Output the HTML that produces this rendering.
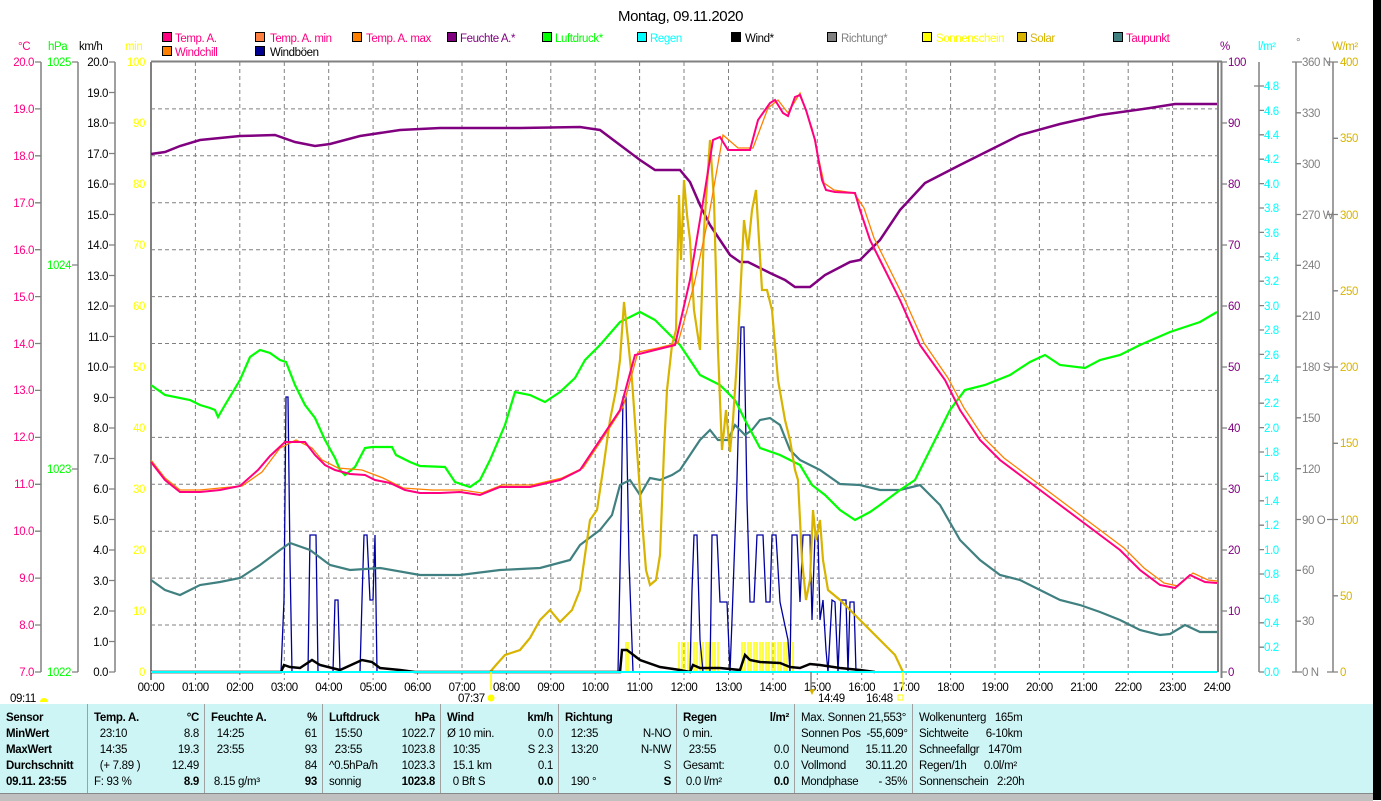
<!DOCTYPE html>
<html><head><meta charset="utf-8"><style>
body{margin:0;width:1381px;height:800px;overflow:hidden;background:#fff;font-family:"Liberation Sans",sans-serif;position:relative}
svg{position:absolute;left:0;top:0}
svg text{font-family:"Liberation Sans",sans-serif;font-size:11.5px;letter-spacing:-0.4px}
.tb{position:absolute;top:704px;height:89px;background:#cdf5f5;border-right:1px solid #a0a0a0;font-size:11.5px;letter-spacing:-0.3px}
.tb div{height:16px;line-height:16px;display:flex;justify-content:space-between;padding:0 5px 0 6px;white-space:pre}
.tb .h{font-weight:bold;margin-top:6px}
.tb b{font-weight:bold}
</style></head><body>
<svg width="1381" height="800" viewBox="0 0 1381 800">
<rect x="1373" y="0" width="8" height="800" fill="#000"/>
<text x="618" y="21" style="font-size:15px">Montag, 09.11.2020</text>
<!-- legend -->
<g stroke="#000" stroke-width="1">
<rect x="162.5" y="32.5" width="9" height="9" fill="#ff0080"/>
<rect x="255.5" y="32.5" width="9" height="9" fill="#ff8040"/>
<rect x="352.5" y="32.5" width="9" height="9" fill="#ff8000"/>
<rect x="447.5" y="32.5" width="9" height="9" fill="#800080"/>
<rect x="542.5" y="32.5" width="9" height="9" fill="#00ff00"/>
<rect x="637.5" y="32.5" width="9" height="9" fill="#00ffff"/>
<rect x="731.5" y="32.5" width="9" height="9" fill="#000"/>
<rect x="827.5" y="32.5" width="9" height="9" fill="#808080"/>
<rect x="922.5" y="32.5" width="9" height="9" fill="#ffff00"/>
<rect x="1017.5" y="32.5" width="9" height="9" fill="#d8b400"/>
<rect x="1113.5" y="32.5" width="9" height="9" fill="#408080"/>
<rect x="162.5" y="46.5" width="9" height="9" fill="#ff8000"/>
<rect x="255.5" y="46.5" width="9" height="9" fill="#000090"/>
</g>
<g>
<text x="175" y="42" fill="#ff0080">Temp. A.</text>
<text x="270" y="42" fill="#ff0080">Temp. A. min</text>
<text x="366" y="42" fill="#ff0080">Temp. A. max</text>
<text x="460" y="42" fill="#800080">Feuchte A.*</text>
<text x="555" y="42" fill="#00ff00">Luftdruck*</text>
<text x="650" y="42" fill="#00ffff">Regen</text>
<text x="745" y="42" fill="#000">Wind*</text>
<text x="841" y="42" fill="#808080">Richtung*</text>
<text x="936" y="42" fill="#ffff00">Sonnenschein</text>
<text x="1030" y="42" fill="#d8b400">Solar</text>
<text x="1126" y="42" fill="#ff0080">Taupunkt</text>
<text x="175" y="56" fill="#ff0080">Windchill</text>
<text x="270" y="56" fill="#000">Windböen</text>
</g>
<!-- axis headers -->
<text x="18" y="50" fill="#ff0080">°C</text>
<text x="48" y="50" fill="#00ff00">hPa</text>
<text x="79" y="50" fill="#000">km/h</text>
<text x="125" y="50" fill="#ffff00">min</text>
<text x="1220" y="50" fill="#800080">%</text>
<text x="1258" y="50" fill="#00ffff">l/m²</text>
<text x="1296" y="46" fill="#808080">°</text>
<text x="1332" y="50" fill="#d8b400">W/m²</text>
<!-- axis lines -->
<g stroke="#808080" stroke-width="1.5" fill="none">
<line x1="41" y1="62" x2="41" y2="672"/><line x1="78" y1="62" x2="78" y2="672"/><line x1="115" y1="62" x2="115" y2="672"/>
<line x1="1259" y1="62" x2="1259" y2="672"/><line x1="1296" y1="62" x2="1296" y2="672"/><line x1="1333" y1="62" x2="1333" y2="672"/>
</g>
<!-- grid -->
<g stroke="#808080" stroke-width="1" stroke-dasharray="4,3">
<line x1="151" y1="108.9" x2="1217" y2="108.9"/><line x1="151" y1="155.8" x2="1217" y2="155.8"/><line x1="151" y1="202.8" x2="1217" y2="202.8"/><line x1="151" y1="249.7" x2="1217" y2="249.7"/><line x1="151" y1="296.6" x2="1217" y2="296.6"/><line x1="151" y1="343.5" x2="1217" y2="343.5"/><line x1="151" y1="390.4" x2="1217" y2="390.4"/><line x1="151" y1="437.4" x2="1217" y2="437.4"/><line x1="151" y1="484.3" x2="1217" y2="484.3"/><line x1="151" y1="531.2" x2="1217" y2="531.2"/><line x1="151" y1="578.1" x2="1217" y2="578.1"/><line x1="151" y1="625" x2="1217" y2="625"/>
<line x1="195.4" y1="62" x2="195.4" y2="680"/><line x1="239.8" y1="62" x2="239.8" y2="680"/><line x1="284.3" y1="62" x2="284.3" y2="680"/><line x1="328.7" y1="62" x2="328.7" y2="680"/><line x1="373.1" y1="62" x2="373.1" y2="680"/><line x1="417.5" y1="62" x2="417.5" y2="680"/><line x1="462" y1="62" x2="462" y2="680"/><line x1="506.4" y1="62" x2="506.4" y2="680"/><line x1="550.8" y1="62" x2="550.8" y2="680"/><line x1="595.2" y1="62" x2="595.2" y2="680"/><line x1="639.6" y1="62" x2="639.6" y2="680"/><line x1="684" y1="62" x2="684" y2="680"/><line x1="728.5" y1="62" x2="728.5" y2="680"/><line x1="772.9" y1="62" x2="772.9" y2="680"/><line x1="817.3" y1="62" x2="817.3" y2="680"/><line x1="861.7" y1="62" x2="861.7" y2="680"/><line x1="906.1" y1="62" x2="906.1" y2="680"/><line x1="950.6" y1="62" x2="950.6" y2="680"/><line x1="995" y1="62" x2="995" y2="680"/><line x1="1039.4" y1="62" x2="1039.4" y2="680"/><line x1="1083.8" y1="62" x2="1083.8" y2="680"/><line x1="1128.2" y1="62" x2="1128.2" y2="680"/><line x1="1172.6" y1="62" x2="1172.6" y2="680"/>
</g>
<!-- chart border -->
<g stroke="#808080" stroke-width="2" fill="none">
<line x1="151" y1="61.5" x2="1222" y2="61.5"/><line x1="151" y1="62" x2="151" y2="680"/>
<line x1="1218" y1="62" x2="1218" y2="672"/><line x1="1221.5" y1="62" x2="1221.5" y2="678"/>
</g>
<!-- sunshine bars -->
<g stroke="#ffff00" stroke-width="1.5">
<line x1="626" y1="642" x2="626" y2="672"/><line x1="628" y1="642" x2="628" y2="672"/>
<line x1="679" y1="642" x2="679" y2="672"/><line x1="682" y1="642" x2="682" y2="672"/><line x1="685" y1="642" x2="685" y2="672"/><line x1="688" y1="642" x2="688" y2="672"/><line x1="691" y1="642" x2="691" y2="672"/><line x1="694" y1="642" x2="694" y2="672"/><line x1="697" y1="642" x2="697" y2="672"/><line x1="700" y1="642" x2="700" y2="672"/><line x1="703" y1="642" x2="703" y2="672"/><line x1="706" y1="642" x2="706" y2="672"/><line x1="709" y1="642" x2="709" y2="672"/><line x1="712" y1="642" x2="712" y2="672"/><line x1="715" y1="642" x2="715" y2="672"/><line x1="718" y1="642" x2="718" y2="672"/>
<line x1="742" y1="642" x2="742" y2="672"/><line x1="745" y1="642" x2="745" y2="672"/><line x1="748" y1="642" x2="748" y2="672"/><line x1="751" y1="642" x2="751" y2="672"/><line x1="754" y1="642" x2="754" y2="672"/><line x1="757" y1="642" x2="757" y2="672"/><line x1="760" y1="642" x2="760" y2="672"/><line x1="763" y1="642" x2="763" y2="672"/><line x1="766" y1="642" x2="766" y2="672"/><line x1="769" y1="642" x2="769" y2="672"/><line x1="772" y1="642" x2="772" y2="672"/><line x1="775" y1="642" x2="775" y2="672"/><line x1="778" y1="642" x2="778" y2="672"/><line x1="781" y1="642" x2="781" y2="672"/><line x1="784" y1="642" x2="784" y2="672"/><line x1="787" y1="642" x2="787" y2="672"/><line x1="790" y1="642" x2="790" y2="672"/><line x1="793" y1="642" x2="793" y2="672"/>
</g>
<!-- gusts -->
<polyline fill="none" stroke="#0000a0" stroke-width="1.3" points="281,672 284,600 286,397 288,397 290,560 292,672 308,672 310,535 316,535 318,672 333,672 335,600 338,600 340,672 360,672 362,600 364,535 367,535 370,600 373,600 375,535 377,672 618,672 621,520 623,397 626,397 629,560 633,672 690,672 692,590 694,535 697,535 700,640 703,672 710,672 712,535 717,535 720,602 727,602 730,672 732,620 737,480 741,327 744,327 747,500 750,602 754,602 757,535 763,535 766,602 770,602 772,535 776,535 780,602 788,640 790,672 792,535 797,535 800,602 803,535 810,535 812,620 815,535 818,535 820,620 823,600 826,650 828,672 832,600 835,602 838,672 841,600 846,600 848,672 850,602 854,602 856,672"/>
<!-- dewpoint -->
<polyline fill="none" stroke="#408080" stroke-width="2.2" points="151,580 165,590 180,595 200,585 220,582 240,578 260,565 280,550 290,543 310,550 330,565 350,570 380,568 420,575 460,575 500,570 540,568 570,560 580,545 600,530 612,515 620,485 630,480 640,495 650,478 660,480 672,475 680,470 690,455 700,440 710,430 718,440 728,440 735,425 745,435 752,430 760,420 770,418 780,425 790,450 800,460 820,470 840,484 860,485 880,490 900,490 920,485 940,505 960,540 980,560 1000,575 1020,580 1040,590 1060,600 1080,605 1100,612 1120,620 1140,630 1160,635 1170,634 1185,625 1200,632 1217,632"/>
<!-- pressure -->
<polyline fill="none" stroke="#00ff00" stroke-width="2.2" points="151,385 165,395 190,400 200,405 210,408 215,410 218,417 225,405 240,380 250,357 260,350 270,353 280,360 286,362 295,385 305,405 315,418 325,440 335,458 340,470 345,475 355,467 365,448 372,447 392,447 396,455 410,462 420,466 445,467 455,482 470,487 480,480 490,460 505,425 515,392 530,395 545,402 560,392 575,378 585,360 600,345 620,322 640,312 655,320 665,330 680,345 700,375 720,385 735,400 745,420 760,448 780,455 800,465 812,485 825,495 840,510 855,520 870,512 880,505 900,490 915,480 930,450 950,410 965,390 985,385 1010,375 1030,362 1045,355 1060,365 1085,368 1100,360 1120,355 1140,345 1170,332 1200,322 1217,312"/>
<!-- humidity -->
<polyline fill="none" stroke="#800080" stroke-width="2.5" points="151,154 165,152 180,146 200,140 220,138 240,136 275,135 295,142 315,146 330,144 360,136 400,130 440,128 520,128 580,127 600,130 620,145 640,160 655,170 680,170 690,182 700,205 710,225 720,240 730,255 740,262 748,262 760,268 770,273 785,280 795,287 810,287 825,275 850,262 860,260 880,240 900,210 925,183 960,165 990,150 1020,135 1060,124 1100,115 1150,108 1175,104 1217,104"/>
<!-- solar -->
<polyline fill="none" stroke="#d8b400" stroke-width="2.2" points="490,672 496,665 505,655 520,650 530,638 540,620 550,610 560,622 572,610 580,590 590,520 597,510 603,470 610,420 616,390 620,360 624,302 628,340 632,380 637,450 642,520 646,570 650,585 656,580 660,555 664,450 667,390 672,345 676,330 679,195 681,260 684,180 687,215 690,240 694,310 700,350 704,230 710,140 714,200 718,350 722,450 726,410 730,452 733,420 737,360 741,280 744,220 748,250 752,210 756,190 759,240 762,290 767,290 772,310 778,380 785,420 790,440 795,470 798,480 802,560 806,600 810,580 813,510 816,540 820,520 823,560 828,590 840,600 860,620 880,640 895,655 903,672"/>
<!-- windchill/temp -->
<polyline fill="none" stroke="#ff8000" stroke-width="1.3" points="151,460 165,478 180,490 200,490 220,488 242,486 262,472 280,448 296,440 312,448 322,460 338,468 362,470 383,478 403,488 432,490 462,490 482,493 502,485 532,485 562,478 583,468 603,438 623,407 638,352 658,348 678,343 694,285 709,215 723,135 738,148 753,148 768,108 778,100 788,113 800,93 812,128 824,183 834,190 854,193 864,208 874,238 884,258 904,298 924,343 948,378 964,408 984,438 1004,458 1024,473 1044,488 1064,503 1084,518 1104,533 1124,548 1144,568 1164,583 1178,586 1193,573 1208,580 1217,581"/>
<polyline fill="none" stroke="#ff0080" stroke-width="2" points="151,462 165,480 180,492 200,492 220,490 240,486 258,470 270,456 285,442 305,442 315,455 325,465 335,470 350,474 365,475 375,480 390,483 405,490 420,493 440,493 460,492 480,495 500,487 530,487 560,480 580,470 600,440 620,410 635,355 655,350 675,345 690,280 705,190 713,140 720,137 728,150 750,150 758,120 770,103 775,100 783,113 788,116 795,97 800,95 806,110 815,140 822,180 826,190 835,192 855,193 860,210 870,240 880,260 900,300 920,345 945,380 960,410 980,440 1000,460 1020,475 1040,490 1060,505 1080,520 1100,535 1120,550 1140,570 1160,585 1175,588 1190,575 1205,582 1217,583"/>
<!-- wind -->
<polyline fill="none" stroke="#000" stroke-width="2.5" points="151,672 281,672 284,665 290,667 300,668 312,660 320,665 340,670 362,660 372,662 380,668 400,670 415,672 620,672 622,650 627,650 640,660 660,667 680,670 690,672 693,665 700,668 720,668 740,670 745,655 750,660 760,662 780,663 790,667 800,668 810,664 820,665 840,668 860,670 875,672"/>
<line x1="151" y1="672" x2="1217" y2="672" stroke="#00ffff" stroke-width="2"/>
<!-- left ticks and labels -->
<g stroke="#808080" stroke-width="1.3">
<path d="M35 62h6M35 108.9h6M35 155.8h6M35 202.8h6M35 249.7h6M35 296.6h6M35 343.5h6M35 390.4h6M35 437.4h6M35 484.3h6M35 531.2h6M35 578.1h6M35 625h6M35 672h6"/>
<path d="M72 62h6M72 265h6M72 469h6M72 672h6"/>
<path d="M109 62h6M109 92.5h6M109 123h6M109 153.5h6M109 184h6M109 214.5h6M109 245h6M109 275.5h6M109 306h6M109 336.5h6M109 367h6M109 397.5h6M109 428h6M109 458.5h6M109 489h6M109 519.5h6M109 550h6M109 580.5h6M109 611h6M109 641.5h6M109 672h6"/>
<path d="M1222 62h5M1222 123h5M1222 184h5M1222 245h5M1222 306h5M1222 367h5M1222 428h5M1222 489h5M1222 550h5M1222 611h5M1222 672h5"/>
<path d="M1259 86h5M1259 110.4h5M1259 134.8h5M1259 159.2h5M1259 183.6h5M1259 208h5M1259 232.4h5M1259 256.8h5M1259 281.2h5M1259 305.6h5M1259 330h5M1259 354.4h5M1259 378.8h5M1259 403.2h5M1259 427.6h5M1259 452h5M1259 476.4h5M1259 500.8h5M1259 525.2h5M1259 549.6h5M1259 574h5M1259 598.4h5M1259 622.8h5M1259 647.2h5M1259 672h5M1254 86h5"/>
<path d="M1292 62h10M1296 112.8h5M1296 163.7h5M1296 214.5h5M1296 265.3h5M1296 316.2h5M1296 367h5M1296 417.8h5M1296 468.7h5M1296 519.5h5M1296 570.3h5M1296 621.2h5M1292 672h10"/>
<path d="M1333 62h5M1333 138.3h5M1333 214.5h5M1333 290.8h5M1333 367h5M1333 443.3h5M1333 519.5h5M1333 595.8h5M1333 672h5M1327 62h6M1327 214.5h6M1327 367h6M1327 519.5h6M1327 672h6"/>
</g>
<g fill="#ff0080" text-anchor="end">
<text x="34" y="66">20.0</text><text x="34" y="113">19.0</text><text x="34" y="160">18.0</text><text x="34" y="207">17.0</text><text x="34" y="254">16.0</text><text x="34" y="301">15.0</text><text x="34" y="348">14.0</text><text x="34" y="394">13.0</text><text x="34" y="441">12.0</text><text x="34" y="488">11.0</text><text x="34" y="535">10.0</text><text x="34" y="582">9.0</text><text x="34" y="629">8.0</text><text x="34" y="676">7.0</text>
</g>
<g fill="#00ff00" text-anchor="end"><text x="71" y="66">1025</text><text x="71" y="269">1024</text><text x="71" y="473">1023</text><text x="71" y="676">1022</text></g>
<g fill="#000" text-anchor="end">
<text x="108" y="66">20.0</text><text x="108" y="97">19.0</text><text x="108" y="127">18.0</text><text x="108" y="158">17.0</text><text x="108" y="188">16.0</text><text x="108" y="219">15.0</text><text x="108" y="249">14.0</text><text x="108" y="280">13.0</text><text x="108" y="310">12.0</text><text x="108" y="341">11.0</text><text x="108" y="371">10.0</text><text x="108" y="402">9.0</text><text x="108" y="432">8.0</text><text x="108" y="463">7.0</text><text x="108" y="493">6.0</text><text x="108" y="524">5.0</text><text x="108" y="554">4.0</text><text x="108" y="585">3.0</text><text x="108" y="615">2.0</text><text x="108" y="646">1.0</text><text x="108" y="676">0.0</text>
</g>
<g fill="#ffff00" text-anchor="end">
<text x="145" y="66">100</text><text x="145" y="127">90</text><text x="145" y="188">80</text><text x="145" y="249">70</text><text x="145" y="310">60</text><text x="145" y="371">50</text><text x="145" y="432">40</text><text x="145" y="493">30</text><text x="145" y="554">20</text><text x="145" y="615">10</text><text x="145" y="676">0</text>
</g>
<g fill="#800080">
<text x="1228" y="66">100</text><text x="1228" y="127">90</text><text x="1228" y="188">80</text><text x="1228" y="249">70</text><text x="1228" y="310">60</text><text x="1228" y="371">50</text><text x="1228" y="432">40</text><text x="1228" y="493">30</text><text x="1228" y="554">20</text><text x="1228" y="615">10</text><text x="1228" y="676">0</text>
</g>
<g fill="#00ffff">
<text x="1264" y="90">4.8</text><text x="1264" y="115">4.6</text><text x="1264" y="139">4.4</text><text x="1264" y="163">4.2</text><text x="1264" y="188">4.0</text><text x="1264" y="212">3.8</text><text x="1264" y="237">3.6</text><text x="1264" y="261">3.4</text><text x="1264" y="285">3.2</text><text x="1264" y="310">3.0</text><text x="1264" y="334">2.8</text><text x="1264" y="359">2.6</text><text x="1264" y="383">2.4</text><text x="1264" y="407">2.2</text><text x="1264" y="432">2.0</text><text x="1264" y="456">1.8</text><text x="1264" y="481">1.6</text><text x="1264" y="505">1.4</text><text x="1264" y="529">1.2</text><text x="1264" y="554">1.0</text><text x="1264" y="578">0.8</text><text x="1264" y="603">0.6</text><text x="1264" y="627">0.4</text><text x="1264" y="651">0.2</text><text x="1264" y="676">0.0</text>
</g>
<g fill="#808080">
<text x="1302" y="66">360 N</text><text x="1302" y="117">330</text><text x="1302" y="168">300</text><text x="1302" y="219">270 W</text><text x="1302" y="269">240</text><text x="1302" y="320">210</text><text x="1302" y="371">180 S</text><text x="1302" y="422">150</text><text x="1302" y="473">120</text><text x="1302" y="524">90  O</text><text x="1302" y="574">60</text><text x="1302" y="625">30</text><text x="1302" y="676">0   N</text>
</g>
<g fill="#d8b400">
<text x="1340" y="66">400</text><text x="1340" y="142">350</text><text x="1340" y="219">300</text><text x="1340" y="295">250</text><text x="1340" y="371">200</text><text x="1340" y="447">150</text><text x="1340" y="524">100</text><text x="1340" y="600">50</text><text x="1340" y="676">0</text>
</g>
<!-- time labels -->
<g fill="#000" text-anchor="middle">
<text x="151" y="691">00:00</text><text x="195.4" y="691">01:00</text><text x="239.8" y="691">02:00</text><text x="284.3" y="691">03:00</text><text x="328.7" y="691">04:00</text><text x="373.1" y="691">05:00</text><text x="417.5" y="691">06:00</text><text x="462" y="691">07:00</text><text x="506.4" y="691">08:00</text><text x="550.8" y="691">09:00</text><text x="595.2" y="691">10:00</text><text x="639.6" y="691">11:00</text><text x="684" y="691">12:00</text><text x="728.5" y="691">13:00</text><text x="772.9" y="691">14:00</text><text x="817.3" y="691">15:00</text><text x="861.7" y="691">16:00</text><text x="906.1" y="691">17:00</text><text x="950.6" y="691">18:00</text><text x="995" y="691">19:00</text><text x="1039.4" y="691">20:00</text><text x="1083.8" y="691">21:00</text><text x="1128.2" y="691">22:00</text><text x="1172.6" y="691">23:00</text><text x="1217" y="691">24:00</text>
</g>
<text x="10" y="702">09:11</text><path d="M40 702a4 4 0 0 1 8 0z" fill="#ffff00"/>
<text x="458" y="702">07:37</text><circle cx="491" cy="698" r="3.5" fill="#ffff00"/>
<text x="818" y="702">14:49</text><path d="M809 689l3 6 3-6z" fill="#d8b400"/>
<text x="866" y="702">16:48</text><rect x="898" y="695" width="5" height="5" fill="none" stroke="#ffff00"/>
<line x1="491" y1="672" x2="491" y2="690" stroke="#ffff00" stroke-width="1.5"/>
<line x1="903" y1="672" x2="903" y2="690" stroke="#ffff00" stroke-width="1.5"/>
<line x1="811" y1="672" x2="811" y2="690" stroke="#808080" stroke-width="1.5"/>
</svg>
<div style="position:absolute;left:0;top:793px;width:1373px;height:7px;background:#c0c0c0;border-top:1px solid #888"></div>
<div class="tb" style="left:0;width:87px"><div class="h"><b>Sensor</b></div><div><b>MinWert</b></div><div><b>MaxWert</b></div><div><b>Durchschnitt</b></div><div><b>09.11. 23:55</b></div></div>
<div class="tb" style="left:88px;width:116px"><div class="h"><b>Temp. A.</b><b>°C</b></div><div><span>  23:10</span><span>8.8</span></div><div><span>  14:35</span><span>19.3</span></div><div><span>  (+ 7.89 )</span><span>12.49</span></div><div><span>F: 93 %</span><b>8.9</b></div></div>
<div class="tb" style="left:205px;width:117px"><div class="h"><b>Feuchte A.</b><b>%</b></div><div><span>  14:25</span><span>61</span></div><div><span>  23:55</span><span>93</span></div><div><span></span><span>84</span></div><div><span> 8.15 g/m³</span><b>93</b></div></div>
<div class="tb" style="left:323px;width:117px"><div class="h"><b>Luftdruck</b><b>hPa</b></div><div><span>  15:50</span><span>1022.7</span></div><div><span>  23:55</span><span>1023.8</span></div><div><span>^0.5hPa/h</span><span>1023.3</span></div><div><span>sonnig</span><b>1023.8</b></div></div>
<div class="tb" style="left:441px;width:117px"><div class="h"><b>Wind</b><b>km/h</b></div><div><span>Ø 10 min.</span><span>0.0</span></div><div><span>  10:35</span><span>S 2.3</span></div><div><span>  15.1 km</span><span>0.1</span></div><div><span>  0 Bft S</span><b>0.0</b></div></div>
<div class="tb" style="left:559px;width:117px"><div class="h"><b>Richtung</b><b></b></div><div><span>  12:35</span><span>N-NO</span></div><div><span>  13:20</span><span>N-NW</span></div><div><span></span><span>S</span></div><div><span>  190 °</span><b>S</b></div></div>
<div class="tb" style="left:677px;width:117px"><div class="h"><b>Regen</b><b>l/m²</b></div><div><span>0 min.</span><span></span></div><div><span>  23:55</span><span>0.0</span></div><div><span>Gesamt:</span><span>0.0</span></div><div><span> 0.0 l/m²</span><b>0.0</b></div></div>
<div class="tb" style="left:795px;width:117px"><div class="h" style="font-weight:normal"><span>Max. Sonnen 21,553°</span></div><div><span>Sonnen Pos  -55,609°</span></div><div><span>Neumond</span><span>15.11.20</span></div><div><span>Vollmond</span><span>30.11.20</span></div><div><span>Mondphase</span><span>- 35%</span></div></div>
<div class="tb" style="left:913px;width:460px;border-right:none"><div class="h" style="font-weight:normal"><span>Wolkenunterg   165m</span></div><div><span>Sichtweite      6-10km</span></div><div><span>Schneefallgr   1470m</span></div><div><span>Regen/1h      0.0l/m²</span></div><div><span>Sonnenschein   2:20h</span></div></div>
</body></html>
